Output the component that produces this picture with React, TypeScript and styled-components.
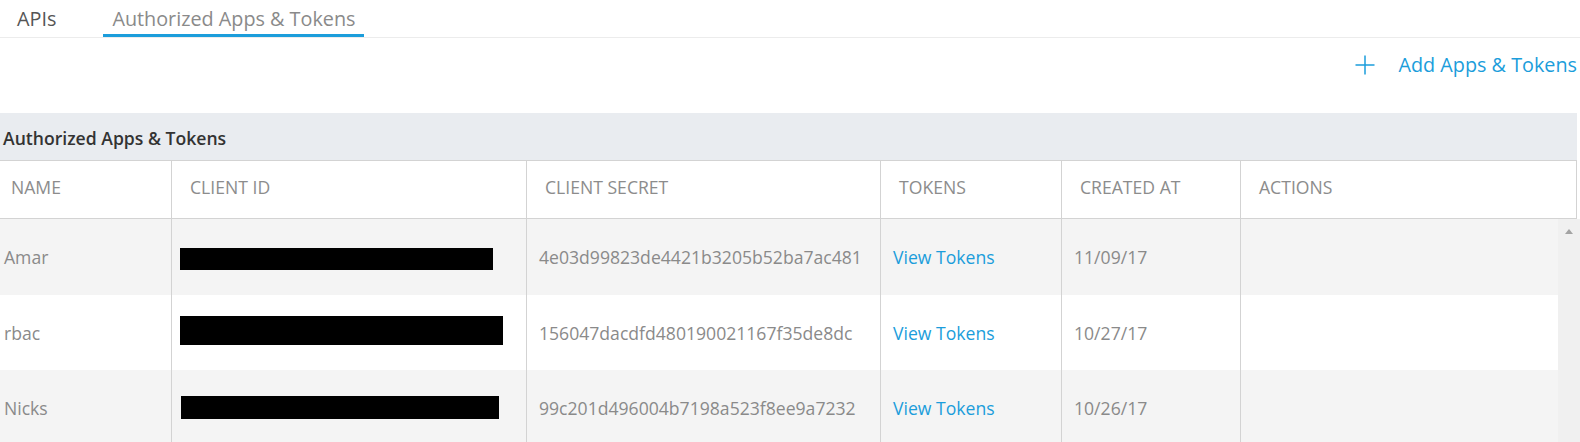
import React from "react";
import styled, { createGlobalStyle } from "styled-components";

const GlobalStyle = createGlobalStyle`
  html, body { margin: 0; padding: 0; background: #fff; }
  body { font-family: "Open Sans", "Liberation Sans", sans-serif; }
`;

const BLUE = "#1b9ddb";
const LINE = "#d3d3d3";

const Page = styled.div`
  width: 1580px;
  display: flex;
  flex-direction: column;
`;

const TabBar = styled.div`
  display: flex;
  height: 38px;
  box-sizing: border-box;
  padding-left: 8px;
  gap: 38px;
  border-bottom: 1px solid #ececec;
`;

const Tab = styled.div<{ $active?: boolean }>`
  height: 37px;
  box-sizing: border-box;
  padding: 5px 9px 0;
  font-size: 19.8px;
  line-height: 27px;
  color: ${(p) => (p.$active ? "#8a8a8a" : "#555")};
  border-bottom: 3px solid ${(p) => (p.$active ? BLUE : "transparent")};
  white-space: nowrap;
`;

const Toolbar = styled.div`
  height: 75px;
  box-sizing: border-box;
  padding: 13px 3px 0 0;
  display: flex;
  justify-content: flex-end;
  align-items: flex-start;
`;

const AddButton = styled.div`
  display: flex;
  align-items: center;
  gap: 23px;
  font-size: 19.8px;
  line-height: 27px;
  color: ${BLUE};
  white-space: nowrap;
`;

const Section = styled.div`
  display: flex;
  flex-direction: column;
`;

const SectionTitle = styled.div`
  width: 1577px;
  height: 47px;
  box-sizing: border-box;
  background: #e9ecf0;
  display: flex;
  align-items: center;
  padding: 3px 0 0 3px;
  font-size: 17.6px;
  font-weight: 600;
  color: #333;
`;

const COLS = "171px 355px 354px 181px 179px 1fr";

const HeaderRow = styled.div`
  width: 1577px;
  height: 59px;
  box-sizing: border-box;
  display: grid;
  grid-template-columns: ${COLS};
  border-top: 1px solid ${LINE};
  border-bottom: 1px solid ${LINE};
  border-right: 1px solid ${LINE};
  background: #fff;
`;

const HeadCell = styled.div<{ $first?: boolean }>`
  display: flex;
  align-items: center;
  padding: 0 0 5px ${(p) => (p.$first ? "11px" : "18px")};
  border-left: ${(p) => (p.$first ? "none" : `1px solid ${LINE}`)};
  font-size: 17.6px;
  color: #8c8c8c;
  text-transform: uppercase;
  white-space: nowrap;
`;

const BodyWrap = styled.div`
  display: flex;
  width: 1580px;
`;

const Rows = styled.div`
  flex: 1;
  display: flex;
  flex-direction: column;
`;

const Row = styled.div<{ $striped?: boolean; $h: number }>`
  display: grid;
  grid-template-columns: ${COLS};
  height: ${(p) => p.$h}px;
  background: ${(p) => (p.$striped ? "#f4f4f4" : "#fff")};
`;

const Cell = styled.div<{ $first?: boolean; $link?: boolean }>`
  display: flex;
  align-items: center;
  padding-left: ${(p) => (p.$first ? "4px" : "12px")};
  border-left: ${(p) => (p.$first ? "none" : `1px solid ${LINE}`)};
  font-size: 17.6px;
  color: ${(p) => (p.$link ? BLUE : "#8a8a8a")};
  white-space: nowrap;
`;

const IdCell = styled.div`
  border-left: 1px solid ${LINE};
  position: relative;
`;

const Redaction = styled.div<{ $l: number; $t: number; $w: number; $h: number }>`
  position: absolute;
  left: ${(p) => p.$l}px;
  top: ${(p) => p.$t}px;
  width: ${(p) => p.$w}px;
  height: ${(p) => p.$h}px;
  background: #000;
`;

const Scrollbar = styled.div`
  width: 22px;
  background: #f0f0f0;
  display: flex;
  justify-content: center;
  padding-top: 10px;
  box-sizing: border-box;
`;

const UpArrow = styled.div`
  width: 0;
  height: 0;
  border-left: 4px solid transparent;
  border-right: 4px solid transparent;
  border-bottom: 5px solid #a3a3a3;
`;

const PlusIcon = () => (
  <svg width="20" height="20" viewBox="0 0 20 20">
    <path d="M10 0.5V19.5M0.5 10H19.5" stroke={BLUE} strokeWidth="1.5" fill="none" />
  </svg>
);

const rows = [
  {
    name: "Amar",
    secret: "4e03d99823de4421b3205b52ba7ac481",
    date: "11/09/17",
    h: 76,
    striped: true,
    box: { l: 8, t: 29, w: 313, h: 22 },
  },
  {
    name: "rbac",
    secret: "156047dacdfd480190021167f35de8dc",
    date: "10/27/17",
    h: 75,
    striped: false,
    box: { l: 8, t: 21, w: 323, h: 29 },
  },
  {
    name: "Nicks",
    secret: "99c201d496004b7198a523f8ee9a7232",
    date: "10/26/17",
    h: 75,
    striped: true,
    box: { l: 9, t: 26, w: 318, h: 23 },
  },
];

export default function App() {
  return (
    <Page>
      <GlobalStyle />
      <TabBar>
        <Tab>APIs</Tab>
        <Tab $active>Authorized Apps &amp; Tokens</Tab>
      </TabBar>
      <Toolbar>
        <AddButton>
          <PlusIcon />
          Add Apps &amp; Tokens
        </AddButton>
      </Toolbar>
      <Section>
        <SectionTitle>Authorized Apps &amp; Tokens</SectionTitle>
        <HeaderRow>
          <HeadCell $first>Name</HeadCell>
          <HeadCell>Client ID</HeadCell>
          <HeadCell>Client Secret</HeadCell>
          <HeadCell>Tokens</HeadCell>
          <HeadCell>Created At</HeadCell>
          <HeadCell>Actions</HeadCell>
        </HeaderRow>
        <BodyWrap>
          <Rows>
            {rows.map((r) => (
              <Row key={r.name} $striped={r.striped} $h={r.h}>
                <Cell $first>{r.name}</Cell>
                <IdCell>
                  <Redaction $l={r.box.l} $t={r.box.t} $w={r.box.w} $h={r.box.h} />
                </IdCell>
                <Cell>{r.secret}</Cell>
                <Cell $link>View Tokens</Cell>
                <Cell>{r.date}</Cell>
                <Cell />
              </Row>
            ))}
          </Rows>
          <Scrollbar>
            <UpArrow />
          </Scrollbar>
        </BodyWrap>
      </Section>
    </Page>
  );
}
